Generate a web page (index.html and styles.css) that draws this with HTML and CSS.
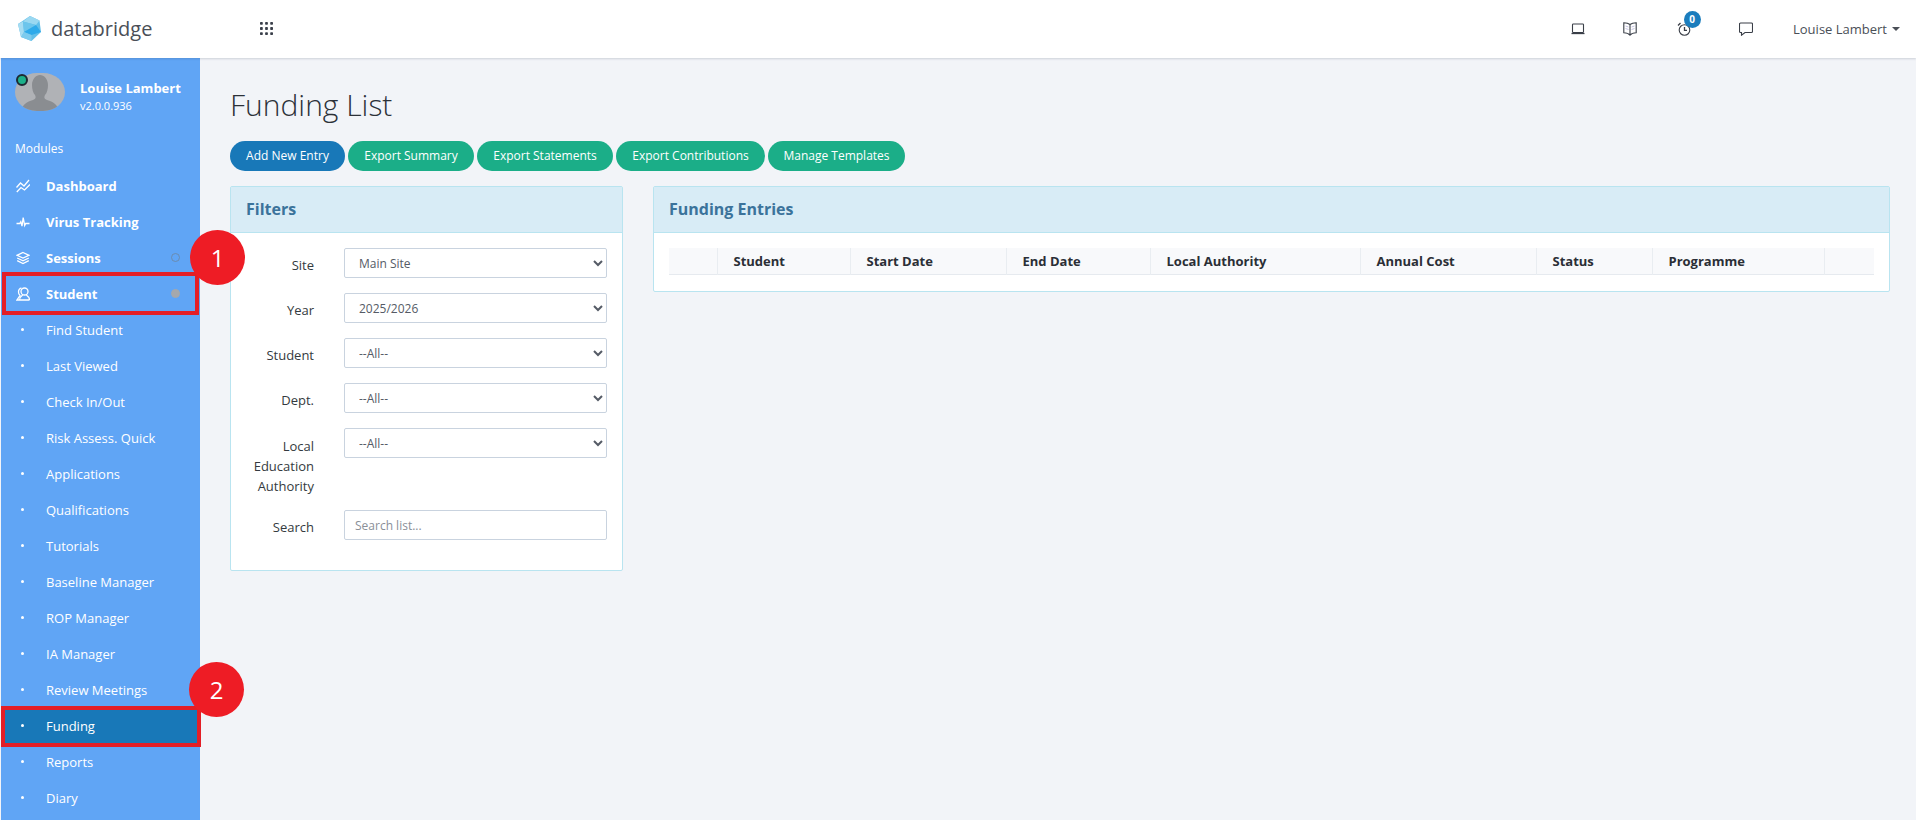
FILE: index.html
```html
<!DOCTYPE html>
<html lang="en">
<head>
<meta charset="utf-8">
<title>Funding List</title>
<link rel="stylesheet" href="styles.css">
</head>
<body>
<header class="topbar">
  <div class="brand">
    <svg class="logo" viewBox="0 0 23 25"><polygon points="12,0 21.500,4.500 23,16 13.500,25 3,21 0,8" fill="#62bfe9"/><polygon points="12,0 21.500,4.500 18,9 5,5.500" fill="#9ad8f1"/><polygon points="5,5.500 0,8 3,21 6,16" fill="#a6dcf2"/><polygon points="5,5.500 18,9 6,16" fill="#6cc5ec"/><polygon points="18,9 23,16 13.500,19 6,16" fill="#2eaaea"/><polygon points="6,16 13.500,19 13.500,25 3,21" fill="#7ccbee"/></svg>
    <span class="brand-name">databridge</span>
  </div>
  <svg class="grid-icon" viewBox="0 0 14 14" fill="#3a3f4a"><rect x="0" y="0" width="3" height="3" rx=".8"/><rect x="5.500" y="0" width="3" height="3" rx=".8"/><rect x="11" y="0" width="3" height="3" rx=".8"/><rect x="0" y="5.500" width="3" height="3" rx=".8"/><rect x="5.500" y="5.500" width="3" height="3" rx=".8"/><rect x="11" y="5.500" width="3" height="3" rx=".8"/><rect x="0" y="11" width="3" height="3" rx=".8"/><rect x="5.500" y="11" width="3" height="3" rx=".8"/><rect x="11" y="11" width="3" height="3" rx=".8"/></svg>
  <div class="top-actions">
    <svg class="ti ti-laptop" viewBox="0 0 14 14"><rect x="1.500" y="2" width="11" height="8.500" rx=".8"/><path d="M.5 11.500h13" stroke-width="1.300"/></svg>
    <svg class="ti ti-book" viewBox="0 0 14 14"><path d="M7 2.500C5.500 1.300 3 .8.800.8v10c2.200 0 4.700.5 6.200 2.400 1.500-1.900 4-2.400 6.200-2.400V.8C11 .8 8.500 1.300 7 2.500zM7 2.500v10.500"/><path class="hatch" d="M2.500 4l3 1M2.500 6.500l3 1M11.500 4l-3 1M11.500 6.500l-3 1"/></svg>
    <span class="clock">
      <svg class="ti" viewBox="0 0 14 14"><circle cx="7.500" cy="8" r="5.300"/><path d="M7.500 5v3.300h2.500M1 3.500L3.500 1" stroke-width="1.300"/></svg>
      <span class="badge">0</span>
    </span>
    <svg class="ti ti-chat" viewBox="0 0 14 14"><path d="M2 1h10.500a1 1 0 0 1 1 1v7.500a1 1 0 0 1-1 1H6l-3.500 2.700v-2.700H1.500a1 1 0 0 1-1-1V2a1 1 0 0 1 1-1z"/></svg>
    <span class="user-menu">Louise Lambert<i class="caret"></i></span>
  </div>
</header>

<div class="layout">
  <aside class="sidebar">
    <div class="profile">
      <span class="avatar">
        <svg viewBox="0 0 50 38"><path d="M7 38c0-7 5-9 11-11 3-1 3-3 2-5-2-2-3-6-3-10 0-6 4-10 8-10s8 4 8 10c0 4-1 8-3 10-1 2-1 4 2 5 6 2 11 4 11 11z" fill="#8a8d91"/></svg>
        <i class="status"></i>
      </span>
      <div class="who"><strong>Louise Lambert</strong><span>v2.0.0.936</span></div>
    </div>
    <div class="modules">Modules</div>
    <nav class="menu">
      <a class="item main"><svg viewBox="0 0 14 14"><path d="M.5 8.500L4.500 4l3.500 3L13 1M.8 13l4.200-4.500 3.500 2.500 5.500-5.500"/></svg>Dashboard</a>
      <a class="item main"><svg viewBox="0 0 14 14"><path d="M.5 8.500h3.300l1-1.800 1.200 4.500 1.200-8.700 1.500 8 1-2h3.800"/></svg>Virus Tracking</a>
      <a class="item main"><svg viewBox="0 0 14 14"><path d="M7 1.500l6 2.800-6 2.800-6-2.800zM1.200 7L7 9.800 12.800 7M1.200 9.700L7 12.500l5.800-2.800"/></svg>Sessions<i class="dot"></i></a>
      <a class="item main"><svg viewBox="0 0 14 14"><circle cx="8.500" cy="4.500" r="3.500"/><path d="M3.500 13c0-2.600 1.500-3.700 3.200-5M13.500 13c0-2.600-1.500-3.700-3.200-5M3.500 13h10M5.500 1.200C3.500 1.200 2.500 3 2.500 5c0 1.400.5 2.500 1.500 3.500L1 13h2.500"/></svg>Student<i class="dot filled"></i></a>
      <a class="item sub">Find Student</a>
      <a class="item sub">Last Viewed</a>
      <a class="item sub">Check In/Out</a>
      <a class="item sub">Risk Assess. Quick</a>
      <a class="item sub">Applications</a>
      <a class="item sub">Qualifications</a>
      <a class="item sub">Tutorials</a>
      <a class="item sub">Baseline Manager</a>
      <a class="item sub">ROP Manager</a>
      <a class="item sub">IA Manager</a>
      <a class="item sub">Review Meetings</a>
      <a class="item sub active">Funding</a>
      <a class="item sub">Reports</a>
      <a class="item sub">Diary</a>
    </nav>
  </aside>

  <main class="content">
    <h1>Funding List</h1>
    <div class="actions">
      <a class="btn primary btn-add">Add New Entry</a>
      <a class="btn btn-summary">Export Summary</a>
      <a class="btn btn-statements">Export Statements</a>
      <a class="btn btn-contributions">Export Contributions</a>
      <a class="btn btn-templates">Manage Templates</a>
    </div>
    <div class="panels">
      <section class="panel filters">
        <h2>Filters</h2>
        <form class="filter-body">
          <div class="row"><label>Site</label><select><option>Main Site</option></select></div>
          <div class="row"><label>Year</label><select><option>2025/2026</option></select></div>
          <div class="row"><label>Student</label><select><option>--All--</option></select></div>
          <div class="row"><label>Dept.</label><select><option>--All--</option></select></div>
          <div class="row row-tall"><label>Local Education Authority</label><select><option>--All--</option></select></div>
          <div class="row"><label>Search</label><input type="text" placeholder="Search list..."></div>
        </form>
      </section>
      <section class="panel entries">
        <h2>Funding Entries</h2>
        <div class="table-wrap">
          <table>
            <colgroup><col class="c0"><col class="c1"><col class="c2"><col class="c3"><col class="c4"><col class="c5"><col class="c6"><col class="c7"><col></colgroup>
            <thead><tr><th></th><th>Student</th><th>Start Date</th><th>End Date</th><th>Local Authority</th><th>Annual Cost</th><th>Status</th><th>Programme</th><th></th></tr></thead>
          </table>
        </div>
      </section>
    </div>
  </main>
</div>

<div class="mark box-student"></div>
<div class="mark box-funding"></div>
<div class="step step-one">1</div>
<div class="step step-two">2</div>
</body>
</html>
```

FILE: styles.css
```css
* { box-sizing: border-box; }
html, body { margin: 0; height: 820px; overflow: hidden; }
body { font-family: "Open Sans", "Liberation Sans", sans-serif; font-size: 13px; color: #343a40; background: #f2f4f8; position: relative; }

.topbar { height: 58px; padding-bottom: 1px; background: #fff; display: flex; align-items: center; box-shadow: 0 1px 2px rgba(40, 50, 80, .18); position: relative; z-index: 2; }
.brand { width: 260px; padding-left: 18px; display: flex; align-items: center; gap: 10px; }
.logo { width: 23px; height: 25px; flex: none; }
.brand-name { font-size: 20px; color: #4a4f57; }
.grid-icon { width: 13px; height: 13px; }
.top-actions { margin-left: auto; display: flex; align-items: center; padding-right: 16px; }
.ti { width: 14px; height: 14px; fill: none; stroke: #3a3f48; stroke-width: 1.100; display: block; }
.hatch { stroke: #b9b6dc; stroke-width: .8; }
.ti-laptop { margin-right: 38.500px; }
.ti-book { margin-right: 39.500px; }
.clock { position: relative; margin-right: 48.500px; }
.badge { position: absolute; left: 7px; top: -11px; width: 17px; height: 17px; border-radius: 50%; background: #1b7dbd; color: #fff; font-size: 10px; font-weight: 700; line-height: 17px; text-align: center; }
.ti-chat { margin-right: 40px; }
.user-menu { font-size: 13px; color: #4a4f57; display: flex; align-items: center; }
.caret { width: 0; height: 0; margin-left: 5px; border: 4px solid transparent; border-top-color: #4a4f57; border-bottom: 0; }

.layout { display: flex; height: 762px; }
.sidebar { width: 199px; margin-left: 1px; background: #60a5f5; color: #fff; flex: none; overflow: hidden; }
.profile { display: flex; align-items: flex-start; padding: 15px 0 0 14px; height: 69px; }
.avatar { width: 50px; height: 38px; border-radius: 22px / 19px; background: #b0b2b6; position: relative; flex: none; }
.avatar svg { width: 50px; height: 38px; display: block; border-radius: 22px / 19px; }
.status { position: absolute; left: 1px; top: 1px; width: 12px; height: 12px; border-radius: 50%; background: #1cb08a; border: 2px solid #1d2a33; }
.who { margin: 6px 0 0 15px; display: flex; flex-direction: column; font-size: 11px; line-height: 18px; }
.who strong { font-size: 13px; }
.modules { padding-left: 14px; margin-top: 13px; font-size: 12px; line-height: 18px; }
.menu { display: flex; flex-direction: column; margin-top: 10px; }
.item { height: 36px; display: flex; align-items: center; padding-left: 45px; font-size: 13px; color: #fff; position: relative; }
.item.main { font-weight: 700; }
.item.main svg { position: absolute; left: 15px; top: 11px; width: 14px; height: 14px; fill: none; stroke: #fff; stroke-width: 1.300; }
.item.sub::before { content: ""; position: absolute; left: 20px; top: 16px; width: 3px; height: 3px; border-radius: 50%; background: #fff; }
.item.active { background: #1878b8; }
.dot { position: absolute; left: 170px; top: 13px; width: 9px; height: 9px; border-radius: 50%; border: 1px solid rgba(110, 130, 150, .7); }
.dot.filled { background: #a5a8ac; border-color: #a5a8ac; }

.content { flex: 1; padding: 27px 26px 0 30px; min-width: 0; }
h1 { margin: 0; font-size: 30px; font-weight: 300; line-height: 40px; color: #2c3138; }
.actions { display: flex; gap: 3px; margin-top: 16px; }
.btn { height: 30px; border-radius: 15px; background: #1bae88; color: #fff; font-size: 12px; line-height: 30px; text-align: center; white-space: nowrap; }
.btn.primary { background: #1878b8; }
.btn-add { width: 115px; }
.btn-summary { width: 126px; }
.btn-statements { width: 136px; }
.btn-contributions { width: 149px; }
.btn-templates { width: 137px; }
.panels { display: flex; align-items: flex-start; gap: 30px; margin-top: 15px; }
.panel { background: #fff; border: 1px solid #b9e4f0; border-radius: 2px; }
.panel h2 { margin: 0; height: 46px; padding: 0 15px; background: #d8ecf6; border-bottom: 1px solid #b9e4f0; color: #3b739b; font-size: 16px; font-weight: 700; line-height: 45px; }
.filters { width: 393px; flex: none; }
.entries { flex: 1; min-width: 0; }
.filter-body { padding: 15px 15px 30px; display: flex; flex-direction: column; gap: 15px; }
.row { display: grid; grid-template-columns: 68px 263px; column-gap: 30px; align-items: start; }
.row label { text-align: right; font-size: 13px; line-height: 20px; padding-top: 7px; color: #343a40; }
.row-tall { margin-bottom: -1px; }
.row-tall label { padding-top: 8px; }
select, input { width: 263px; height: 30px; border: 1px solid #c9d3df; border-radius: 2px; background: #fff; font-family: inherit; font-size: 12px; color: #555b66; padding: 0 10px; }
input::placeholder { color: #8a8f98; opacity: 1; }
.table-wrap { padding: 15px 15px 16px; }
table { width: 100%; border-collapse: collapse; table-layout: fixed; }
thead tr { height: 26px; background: #f8f9fb; border-bottom: 1px solid #e6eaef; }
th { text-align: left; padding: 0 15px 0 16px; font-size: 13px; font-weight: 700; color: #2b2f36; border-right: 1px solid #e9edf1; white-space: nowrap; }
th:last-child { border-right: 0; }
.c0 { width: 48px; } .c1 { width: 133px; } .c2 { width: 156px; } .c3 { width: 144px; } .c4 { width: 210px; } .c5 { width: 176px; } .c6 { width: 116px; } .c7 { width: 172px; }

.mark { position: absolute; border: 4px solid #e31e26; }
.box-student { left: 2px; top: 272px; width: 197px; height: 43px; }
.box-funding { left: 1px; top: 706px; width: 200px; height: 41px; }
.step { position: absolute; width: 55px; height: 55px; border-radius: 50%; background: #ee1c25; color: #fff; font-size: 24px; line-height: 55px; text-align: center; }
.step-one { left: 190px; top: 230px; }
.step-two { left: 189px; top: 662px; }
```
